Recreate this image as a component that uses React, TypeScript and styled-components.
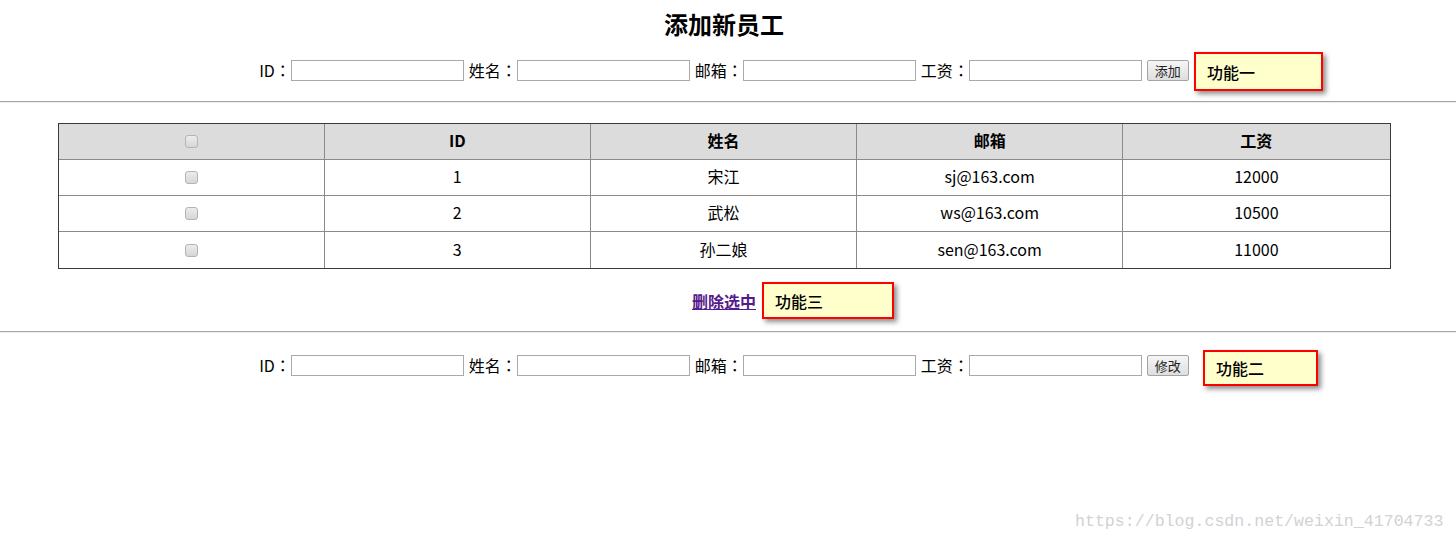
import styled, { createGlobalStyle } from "styled-components";

const GlobalStyle = createGlobalStyle`
  body {
    margin: 0;
    background: #fff;
    color: #000;
    font-family: "Noto Sans CJK SC", "Noto Sans", sans-serif;
    font-size: 16px;
  }
`;

const Page = styled.div`
  position: relative;
  width: 1456px;
  height: 548px;
  overflow: hidden;
`;

const Band = styled.div`
  width: 1448px;
  display: flex;
  flex-direction: column;
  align-items: center;
`;

const Title = styled.h2`
  margin: 8px 0 0;
  height: 32px;
  line-height: 32px;
  font-size: 24px;
  font-weight: 700;
`;

const FormRow = styled.div<{ $top: number }>`
  margin-top: ${(p) => p.$top}px;
  height: 24px;
  display: flex;
  align-items: center;
`;

const Field = styled.label`
  display: flex;
  align-items: center;
  margin-right: 5px;
  font-size: 16px;
  line-height: 21px;
  white-space: nowrap;
`;

const Colon = styled.span`
  font-family: "Noto Sans CJK TC", "Noto Sans CJK SC", sans-serif;
  display: inline-block;
  width: 16px;
  text-align: center;
`;

const TextInput = styled.input`
  box-sizing: border-box;
  width: 173px;
  height: 21px;
  margin: 0;
  padding: 1px 2px;
  border: 1px solid #a9a9a9;
  background: #fff;
  font-size: 13px;
  outline: none;
`;

const Button = styled.button`
  box-sizing: border-box;
  width: 42px;
  height: 21px;
  padding: 0;
  border: 1px solid #a3a3a3;
  border-radius: 2px;
  background: linear-gradient(#f6f6f6, #dedede);
  font-family: "Noto Sans CJK SC", sans-serif;
  font-size: 13px;
  line-height: 19px;
  color: #222;
`;

const Rule = styled.div<{ $top: number }>`
  margin-top: ${(p) => p.$top}px;
  width: 100%;
  height: 1px;
  background: #a6a6a6;
  border-bottom: 1px solid #ececec;
`;

const Table = styled.table`
  margin-top: 20px;
  width: 1333px;
  table-layout: fixed;
  border-collapse: separate;
  border-spacing: 0;
  border: 1px solid #3a3a3a;
`;

const HeadCell = styled.th`
  box-sizing: border-box;
  height: 36px;
  padding: 0 0 3px;
  background: #dcdcdc;
  border-right: 1px solid #8a8a8a;
  border-bottom: 1px solid #8a8a8a;
  font-weight: 700;
  font-size: 16px;
  text-align: center;
  &:last-child {
    border-right: none;
  }
`;

const Cell = styled.td`
  box-sizing: border-box;
  height: 36px;
  padding: 0 0 3px;
  border-right: 1px solid #8a8a8a;
  border-bottom: 1px solid #8a8a8a;
  font-size: 16px;
  text-align: center;
  &:last-child {
    border-right: none;
  }
  tr:last-child > & {
    border-bottom: none;
  }
`;

const Check = styled.input.attrs({ type: "checkbox" })`
  appearance: none;
  box-sizing: border-box;
  width: 13px;
  height: 13px;
  margin: 0;
  vertical-align: middle;
  border: 1px solid #b4b4b4;
  border-radius: 3px;
  background: linear-gradient(#ececec, #d6d6d6);
  position: relative;
  top: -1px;
`;

const ActionRow = styled.div`
  margin-top: 20px;
  height: 24px;
  line-height: 24px;
`;

const DeleteLink = styled.a`
  font-weight: 700;
  font-size: 16px;
  color: #551a8b;
  text-decoration: underline;
`;

const Note = styled.div<{ $x: number; $y: number; $w: number; $h: number }>`
  position: absolute;
  left: ${(p) => p.$x}px;
  top: ${(p) => p.$y}px;
  width: ${(p) => p.$w}px;
  height: ${(p) => p.$h}px;
  box-sizing: border-box;
  padding-left: 11px;
  display: flex;
  align-items: center;
  background: #ffffcc;
  border: 2px solid #f00;
  box-shadow: 3px 3px 5px rgba(0, 0, 0, 0.45);
  font-size: 16px;
  font-weight: 500;
`;

const Watermark = styled.div`
  position: absolute;
  left: 1075px;
  top: 512px;
  font-family: "Liberation Mono", "DejaVu Sans Mono", monospace;
  font-size: 16.6px;
  color: #d2d2d2;
  white-space: nowrap;
`;

const employees = [
  { id: 1, name: "宋江", email: "sj@163.com", salary: 12000 },
  { id: 2, name: "武松", email: "ws@163.com", salary: 10500 },
  { id: 3, name: "孙二娘", email: "sen@163.com", salary: 11000 },
];

const fields = ["ID", "姓名", "邮箱", "工资"];

const EmployeeForm = ({ top, action }: { top: number; action: string }) => (
  <FormRow $top={top}>
    {fields.map((f) => (
      <Field key={f}>
        {f}
        <Colon>：</Colon>
        <TextInput />
      </Field>
    ))}
    <Button>{action}</Button>
  </FormRow>
);

export default function App() {
  return (
    <Page>
      <GlobalStyle />
      <Band>
        <Title>添加新员工</Title>
        <EmployeeForm top={18} action="添加" />
      </Band>
      <Rule $top={19} />
      <Band>
        <Table>
          <thead>
            <tr>
              <HeadCell>
                <Check />
              </HeadCell>
              <HeadCell>ID</HeadCell>
              <HeadCell>姓名</HeadCell>
              <HeadCell>邮箱</HeadCell>
              <HeadCell>工资</HeadCell>
            </tr>
          </thead>
          <tbody>
            {employees.map((e) => (
              <tr key={e.id}>
                <Cell>
                  <Check />
                </Cell>
                <Cell>{e.id}</Cell>
                <Cell>{e.name}</Cell>
                <Cell>{e.email}</Cell>
                <Cell>{e.salary}</Cell>
              </tr>
            ))}
          </tbody>
        </Table>
        <ActionRow>
          <DeleteLink href="#">删除选中</DeleteLink>
        </ActionRow>
      </Band>
      <Rule $top={18} />
      <Band>
        <EmployeeForm top={20} action="修改" />
      </Band>

      <Note $x={1194} $y={52} $w={129} $h={39}>
        功能一
      </Note>
      <Note $x={762} $y={282} $w={132} $h={37}>
        功能三
      </Note>
      <Note $x={1203} $y={350} $w={115} $h={36}>
        功能二
      </Note>
      <Watermark>https://blog.csdn.net/weixin_41704733</Watermark>
    </Page>
  );
}
